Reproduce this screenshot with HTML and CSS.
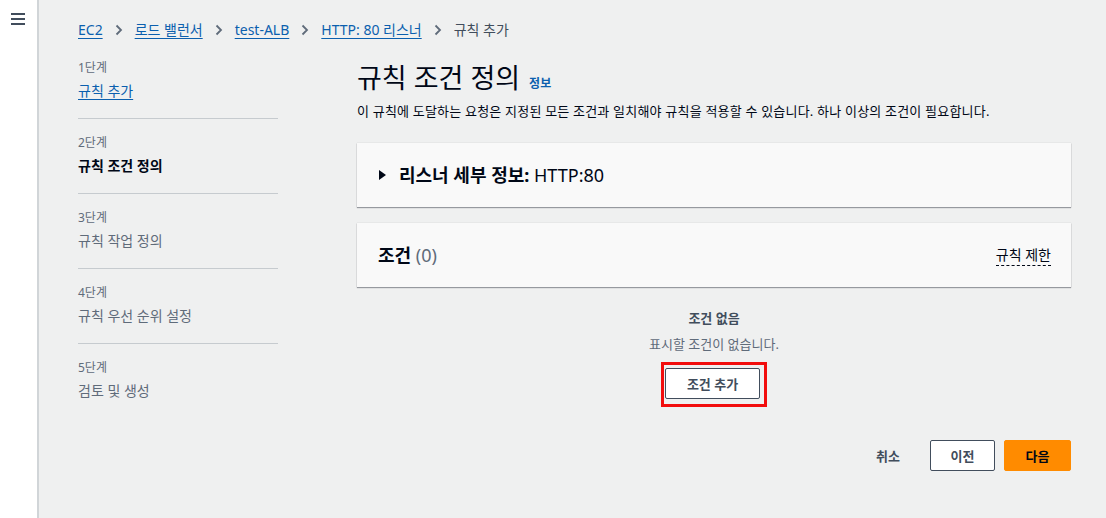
FILE: index.html
```html
<!DOCTYPE html>
<html lang="ko">
	<head>
		<meta charset="UTF-8" />
		<meta name="viewport" content="width=device-width, initial-scale=1.0" />
		<title>규칙 추가</title>
		<link rel="stylesheet" href="styles.css">
	</head>
	<body>
		<nav class="side-nav">
			<button class="menu-toggle" aria-label="메뉴">
				<svg width="14" height="12" viewBox="0 0 14 12">
					<rect x="0" y="0" width="14" height="2" fill="#414d5c" />
					<rect x="0" y="5" width="14" height="2" fill="#414d5c" />
					<rect x="0" y="10" width="14" height="2" fill="#414d5c" />
				</svg>
			</button>
		</nav>

		<main class="main">
			<div class="breadcrumb">
				<a href="#">EC2</a>
				<span class="crumb-sep"><svg width="8" height="12" viewBox="0 0 8 12"><polyline points="1.5,1.5 6,6 1.5,10.5" fill="none" stroke="#5f6b7a" stroke-width="1.8" /></svg></span>
				<a href="#">로드 밸런서</a>
				<span class="crumb-sep"><svg width="8" height="12" viewBox="0 0 8 12"><polyline points="1.5,1.5 6,6 1.5,10.5" fill="none" stroke="#5f6b7a" stroke-width="1.8" /></svg></span>
				<a href="#">test-ALB</a>
				<span class="crumb-sep"><svg width="8" height="12" viewBox="0 0 8 12"><polyline points="1.5,1.5 6,6 1.5,10.5" fill="none" stroke="#5f6b7a" stroke-width="1.8" /></svg></span>
				<a href="#">HTTP: 80 리스너</a>
				<span class="crumb-sep"><svg width="8" height="12" viewBox="0 0 8 12"><polyline points="1.5,1.5 6,6 1.5,10.5" fill="none" stroke="#5f6b7a" stroke-width="1.8" /></svg></span>
				<span class="crumb-current">규칙 추가</span>
			</div>

			<div class="wizard">
				<ol class="steps">
					<li class="step">
						<div class="step-num">1단계</div>
						<a href="#" class="step-name link">규칙 추가</a>
					</li>
					<li class="step active">
						<div class="step-num">2단계</div>
						<div class="step-name">규칙 조건 정의</div>
					</li>
					<li class="step">
						<div class="step-num">3단계</div>
						<div class="step-name">규칙 작업 정의</div>
					</li>
					<li class="step">
						<div class="step-num">4단계</div>
						<div class="step-name">규칙 우선 순위 설정</div>
					</li>
					<li class="step">
						<div class="step-num">5단계</div>
						<div class="step-name">검토 및 생성</div>
					</li>
				</ol>

				<section class="content">
					<div class="page-header">
						<h1>규칙 조건 정의</h1>
						<a href="#" class="info-link">정보</a>
					</div>
					<p class="description">이 규칙에 도달하는 요청은 지정된 모든 조건과 일치해야 규칙을 적용할 수 있습니다. 하나 이상의 조건이 필요합니다.</p>

					<div class="panel">
						<div class="panel-head expand">
							<span class="caret"></span>
							<h2><b>리스너 세부 정보:</b> HTTP:80</h2>
						</div>
					</div>

					<div class="panel">
						<div class="panel-head">
							<h2><b>조건</b> <span class="count">(0)</span></h2>
							<span class="limit-link">규칙 제한</span>
						</div>
					</div>

					<div class="empty">
						<div class="empty-title">조건 없음</div>
						<div class="empty-text">표시할 조건이 없습니다.</div>
						<span class="highlight"><button class="btn">조건 추가</button></span>
					</div>

					<div class="actions">
						<button class="btn-link">취소</button>
						<button class="btn">이전</button>
						<button class="btn primary">다음</button>
					</div>
				</section>
			</div>
		</main>
	</body>
</html>
```

FILE: styles.css
```css
body {
	font-family: "Noto Sans", "Noto Sans CJK KR", sans-serif;
	color: #000716;
	display: flex;
	height: 100vh;
	margin: 0;
	background-color: #eff0f0;
}
.side-nav {
	width: 37px;
	flex-shrink: 0;
	background-color: #fff;
	border-right: 2px solid #d1d5d8;
}
.menu-toggle {
	display: block;
	margin: 13px 0 0 11px;
	padding: 0;
	border: none;
	background: none;
	line-height: 0;
}
.main {
	flex: 1;
	padding: 20px 35px 0 39px;
}
.breadcrumb {
	display: flex;
	align-items: center;
	height: 20px;
	font-size: 14px;
	line-height: 20px;
}
.breadcrumb a {
	color: #0b5fae;
	text-decoration: underline;
	text-underline-offset: 3px;
}
.crumb-sep {
	display: flex;
	margin: 0 12px;
}
.crumb-current {
	color: #414d5c;
}
.wizard {
	display: grid;
	grid-template-columns: 200px 1fr;
	column-gap: 79px;
	margin-top: 20px;
}
.steps {
	list-style: none;
	margin: 0;
	padding: 0;
}
.step {
	padding-bottom: 17px;
	border-bottom: 1px solid #c6cbcf;
}
.step + .step {
	padding-top: 16px;
}
.step:last-child {
	border-bottom: none;
}
.step-num {
	font-size: 12px;
	line-height: 16px;
	color: #5f6b7a;
}
.step-name {
	display: block;
	margin-top: 5px;
	font-size: 14px;
	line-height: 20px;
	color: #5f6b7a;
}
.step-name.link {
	display: inline-block;
	color: #0b5fae;
	text-decoration: underline;
	text-underline-offset: 3px;
}
.step.active .step-name {
	color: #000716;
	font-weight: 700;
}
.page-header {
	display: flex;
	align-items: baseline;
	gap: 9px;
	margin-top: 2px;
}
.page-header h1 {
	margin: 0;
	font-size: 27px;
	line-height: 32px;
	font-weight: 400;
}
.info-link {
	font-size: 12px;
	font-weight: 700;
	color: #0b5fae;
	text-decoration: none;
}
.description {
	margin: 8px 0 0;
	font-size: 13px;
	line-height: 18px;
	letter-spacing: 0.2px;
	color: #000716;
}
.panel {
	background-color: #f9f9f9;
	box-shadow: 0 1px 1px rgba(0, 7, 22, 0.35), 0 0 1px rgba(0, 7, 22, 0.2);
	margin-top: 16px;
}
.description + .panel {
	margin-top: 23px;
}
.panel-head {
	display: flex;
	align-items: center;
	justify-content: space-between;
	height: 64px;
	padding: 0 20px 0 21px;
}
.panel-head.expand {
	justify-content: flex-start;
	padding-left: 22px;
}
.panel-head h2 {
	margin: 0;
	font-size: 18px;
	line-height: 24px;
	font-weight: 400;
}
.caret {
	width: 0;
	height: 0;
	border-top: 5px solid transparent;
	border-bottom: 5px solid transparent;
	border-left: 7px solid #000716;
	margin-right: 13px;
}
.count {
	color: #5f6b7a;
}
.limit-link {
	font-size: 14px;
	line-height: 20px;
	border-bottom: 1px dashed #000716;
}
.empty {
	display: flex;
	flex-direction: column;
	align-items: center;
	margin-top: 22px;
	color: #5f6b7a;
	font-size: 13px;
	line-height: 18px;
}
.empty-title {
	font-weight: 700;
	color: #414d5c;
}
.empty-text {
	margin-top: 8px;
}
.highlight {
	margin-top: 9px;
	padding: 3px 4px 5px 1px;
	border: 3px solid #f20d0d;
	line-height: 0;
}
.btn {
	font-family: inherit;
	font-size: 13px;
	font-weight: 700;
	height: 31px;
	padding: 0 21px;
	background-color: #fff;
	color: #414d5c;
	border: 1px solid #414d5c;
	border-radius: 2px;
}
.actions {
	display: flex;
	justify-content: flex-end;
	align-items: center;
	gap: 9px;
	margin-top: 33px;
}
.btn-link {
	font-family: inherit;
	font-size: 13px;
	font-weight: 700;
	color: #414d5c;
	background: none;
	border: none;
	padding: 0 21px;
	height: 31px;
}
.actions .btn {
	width: 65px;
	padding: 0;
}
.btn.primary {
	width: 67px;
	background-color: #ff8b00;
	border-color: #ff8b00;
	color: #000716;
}
```
